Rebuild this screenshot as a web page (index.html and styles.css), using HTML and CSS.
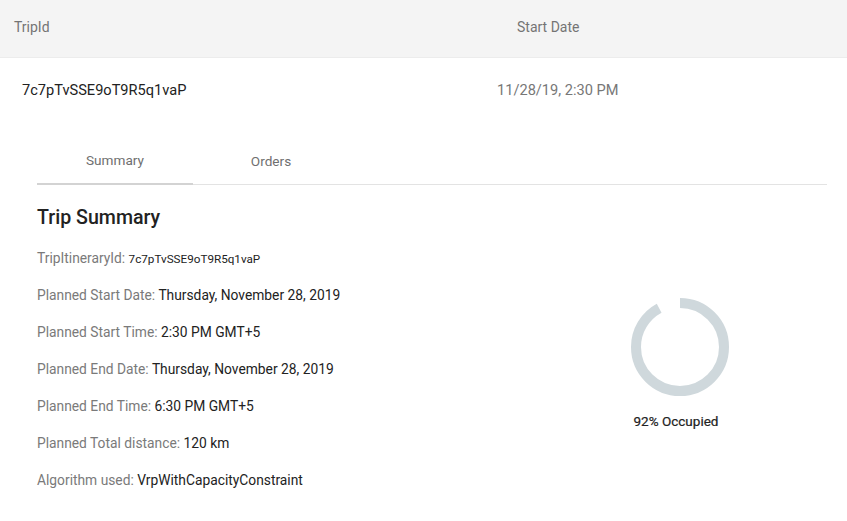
FILE: index.html
```html
<!DOCTYPE html>
<html>
<head>
<meta charset="utf-8">
<link rel="stylesheet" href="styles.css">
</head>
<body>
<div class="table">
  <div class="head-row">
    <div class="cell c1">TripId</div>
    <div class="cell c2">Start Date</div>
  </div>
  <div class="data-row">
    <div class="cell c1 id">7c7pTvSSE9oT9R5q1vaP</div>
    <div class="cell c2 date">11/28/19, 2:30 PM</div>
  </div>
  <div class="detail">
    <div class="tabs">
      <div class="tab active">Summary</div>
      <div class="tab">Orders</div>
    </div>
    <div class="content">
      <div class="info">
        <h2 class="title">Trip Summary</h2>
        <div class="line"><span class="lbl">TripItineraryId:</span> <span class="val small">7c7pTvSSE9oT9R5q1vaP</span></div>
        <div class="line"><span class="lbl">Planned Start Date:</span> <span class="val">Thursday, November 28, 2019</span></div>
        <div class="line"><span class="lbl">Planned Start Time:</span> <span class="val">2:30 PM GMT+5</span></div>
        <div class="line"><span class="lbl">Planned End Date:</span> <span class="val">Thursday, November 28, 2019</span></div>
        <div class="line"><span class="lbl">Planned End Time:</span> <span class="val">6:30 PM GMT+5</span></div>
        <div class="line"><span class="lbl">Planned Total distance:</span> <span class="val">120 km</span></div>
        <div class="line"><span class="lbl">Algorithm used:</span> <span class="val">VrpWithCapacityConstraint</span></div>
      </div>
      <div class="chart">
        <svg class="donut" width="110" height="110" viewBox="0 0 110 110">
          <circle cx="55" cy="55" r="44" fill="none" stroke="#cfd8dc" stroke-width="10"
            stroke-dasharray="254.3 276.5" transform="rotate(-90 55 55)"/>
        </svg>
        <div class="occ">92% Occupied</div>
      </div>
    </div>
  </div>
</div>
</body>
</html>
```
FILE: styles.css
```css
* { box-sizing: border-box; }
html, body { margin: 0; padding: 0; background: #fff; }
body {
  font-family: Roboto, "Noto Sans", sans-serif;
  width: 847px;
  height: 521px;
  overflow: hidden;
}
.table { width: 847px; }
.head-row {
  display: flex;
  height: 58px;
  align-items: center;
  background: #f4f4f4;
  border-bottom: 1px solid #ececec;
  padding-bottom: 3px;
}
.head-row .cell {
  font-size: 14px;
  font-weight: 400;
  color: #747474;
}
.head-row .c1 { width: 517px; padding-left: 14px; }
.data-row {
  display: flex;
  align-items: center;
  height: 62px;
  padding-top: 2px;
}
.data-row .c1 { width: 497px; padding-left: 22px; }
.id { font-size: 14.6px; color: #222; }
.date { font-size: 14.6px; color: #777; }
.detail { padding: 16px 20px 0 37px; }
.tabs {
  display: flex;
  height: 49px;
  border-bottom: 1px solid #e3e3e3;
}
.tab {
  width: 156px;
  display: flex;
  align-items: center;
  justify-content: center;
  font-size: 13.6px;
  font-weight: 400;
  color: #6f6f6f;
  padding-top: 1px;
}
.tab.active {
  border-bottom: 2px solid #d3d3d3;
  margin-bottom: -1px;
}
.content {
  display: flex;
}
.info { width: 560px; }
.title {
  margin: 21px 0 0;
  font-size: 19.6px;
  font-weight: 500;
  color: #222;
  line-height: 24px;
}
.line {
  margin-top: 13px;
  line-height: 24px;
  height: 24px;
  font-size: 13.8px;
  color: #222;
}
.title + .line { margin-top: 16px; }
.lbl { color: #7a7a7a; }
.val.small { font-size: 11.7px; }
.chart {
  display: flex;
  flex-direction: column;
  align-items: center;
  width: 166px;
  padding-top: 107px;
}
.donut { display: block; }
.occ {
  margin-top: 11px;
  margin-right: 8px;
  font-size: 13.5px;
  font-weight: 400;
  color: #222;
  -webkit-text-stroke: 0.2px #222;
}
```
